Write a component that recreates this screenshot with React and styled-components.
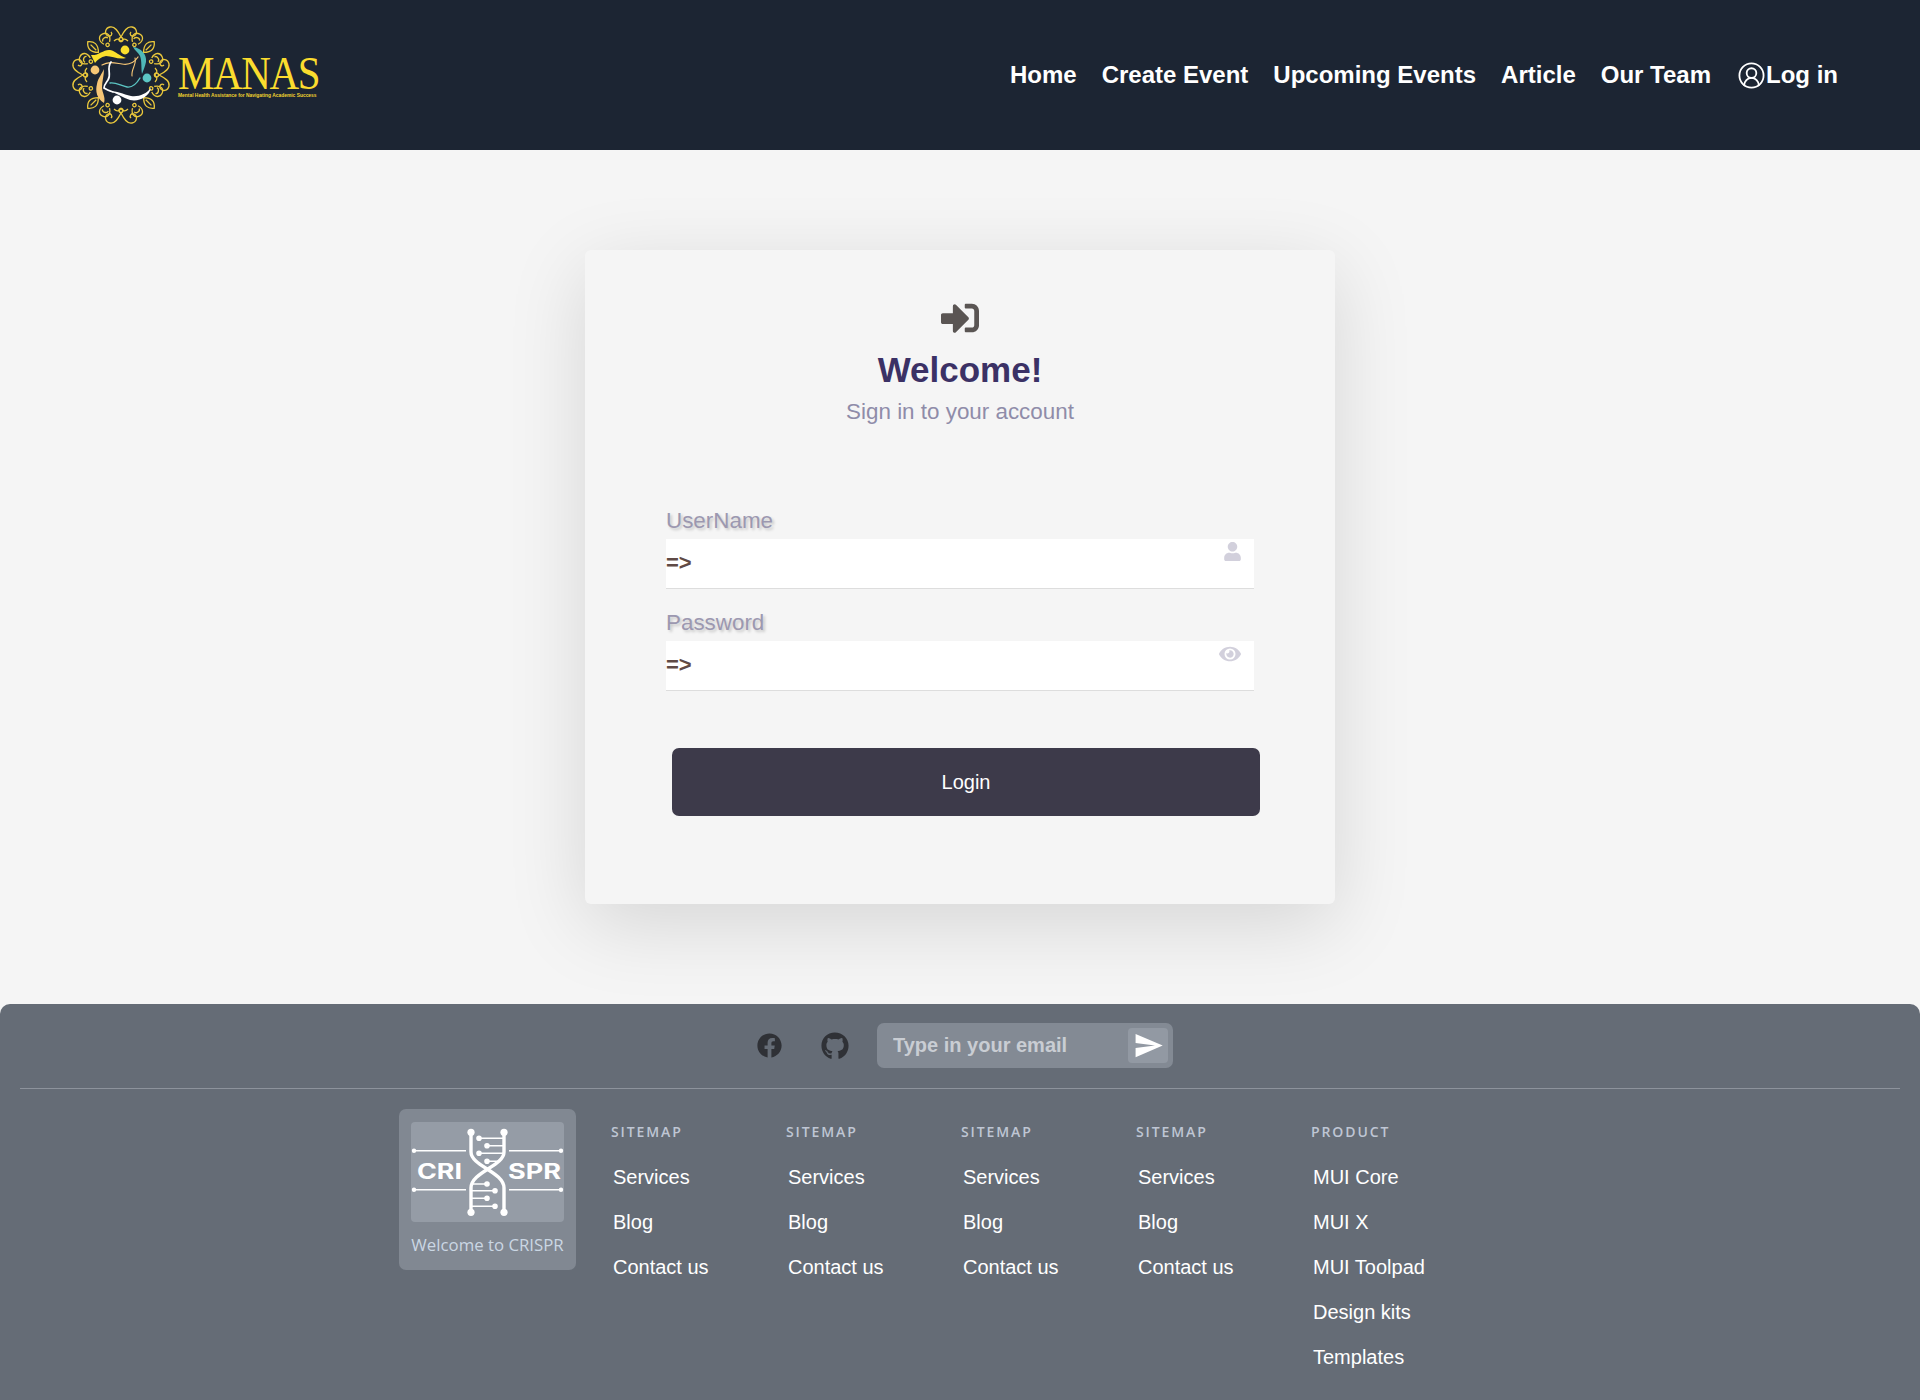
import styled, { createGlobalStyle } from "styled-components";
import { CircleUserRound } from "lucide-react";
import { FaFacebook, FaGithub, FaSignInAlt, FaUser, FaEye } from "react-icons/fa";
import { MdSend } from "react-icons/md";

const NAV_LINKS = ["Home", "Create Event", "Upcoming Events", "Article", "Our Team"];

const SITEMAP_LINKS = ["Services", "Blog", "Contact us"];

const FOOTER_COLUMNS = [
    { title: "SITEMAP", links: SITEMAP_LINKS },
    { title: "SITEMAP", links: SITEMAP_LINKS },
    { title: "SITEMAP", links: SITEMAP_LINKS },
    { title: "SITEMAP", links: SITEMAP_LINKS },
    { title: "PRODUCT", links: ["MUI Core", "MUI X", "MUI Toolpad", "Design kits", "Templates"] },
];

const GlobalStyle = createGlobalStyle`
    html, body {
        margin: 0;
        padding: 0;
        background: #f5f5f5;
        font-family: "Liberation Sans", Arial, sans-serif;
    }
    * {
        box-sizing: border-box;
    }
`;

const Page = styled.div`
    width: 1920px;
    height: 1400px;
    display: flex;
    flex-direction: column;
    overflow: hidden;
`;

const Header = styled.header`
    height: 150px;
    flex: none;
    display: flex;
    align-items: center;
    justify-content: space-between;
    padding: 0 82px 0 71px;
    background: #1c2533;
`;

const Brand = styled.div`
    display: flex;
    align-items: center;
    gap: 7px;
`;

const BrandText = styled.div`
    display: flex;
    flex-direction: column;
    width: 142px;
    margin-top: 6px;
`;

const BrandName = styled.span`
    font-family: "Liberation Serif", serif;
    font-size: 41px;
    line-height: 36px;
    letter-spacing: -1.4px;
    color: #fbdc2e;
    white-space: nowrap;
    transform: scaleY(1.14);
    transform-origin: center bottom;
`;

const BrandTagline = styled.span`
    font-size: 4.9px;
    line-height: 4px;
    font-weight: 700;
    color: #f2d22e;
    white-space: nowrap;
`;

const Nav = styled.nav`
    display: flex;
    align-items: center;
    gap: 25px;
`;

const NavLink = styled.a`
    display: flex;
    align-items: center;
    font-size: 24px;
    font-weight: 700;
    color: #ffffff;
    white-space: nowrap;
`;

const LoginLink = styled(NavLink)`
    margin-left: 1px;
`;

const Main = styled.main`
    flex: 1;
    display: flex;
    justify-content: center;
    align-items: flex-start;
    padding-top: 100px;
`;

const Card = styled.section`
    width: 750px;
    height: 654px;
    padding: 49px 81px 0;
    border-radius: 6px;
    background: #f5f5f5;
    box-shadow: 0 20px 80px rgba(0, 0, 0, 0.13);
`;

const CardHead = styled.div`
    display: flex;
    flex-direction: column;
    align-items: center;
    color: #5a5553;
`;

const Title = styled.h2`
    margin: 12px 0 0;
    font-size: 35px;
    line-height: 42px;
    font-weight: 700;
    color: #3b3165;
`;

const Subtitle = styled.p`
    margin: 7px 0 0;
    font-size: 22.4px;
    line-height: 28px;
    color: #8f8ca9;
`;

const Form = styled.form`
    display: flex;
    flex-direction: column;
    margin-top: 79px;
`;

const Field = styled.div`
    display: flex;
    flex-direction: column;
    margin-bottom: 18px;
`;

const Label = styled.label`
    margin-bottom: 3px;
    font-size: 22.4px;
    line-height: 31px;
    color: #9c98b0;
    text-shadow: 2px 2px 3px rgba(0, 0, 0, 0.2);
`;

const InputWrap = styled.div`
    position: relative;
    color: #d2d0dc;
`;

const Input = styled.input`
    display: block;
    width: 100%;
    height: 50px;
    padding: 0 0 1px;
    border: 0;
    border-bottom: 1px solid #dddddd;
    outline: none;
    background: #ffffff;
    font-family: inherit;
    font-size: 22px;
    font-weight: 700;
    color: #5f4a45;
`;

const FieldIcon = styled.span`
    position: absolute;
    top: ${(p) => p.$top}px;
    right: ${(p) => p.$right}px;
    display: flex;
`;

const LoginButton = styled.button`
    width: 588px;
    height: 68px;
    margin: 39px 0 0 6px;
    border: 0;
    border-radius: 7px;
    background: #3d3a4a;
    font-family: inherit;
    font-size: 20px;
    color: #ffffff;
`;

const Footer = styled.footer`
    height: 396px;
    flex: none;
    padding: 0 20px;
    border-radius: 10px 10px 0 0;
    background: #656c76;
`;

const FooterTop = styled.div`
    height: 85px;
    display: flex;
    align-items: center;
    padding: 0 0 1px 737px;
    border-bottom: 1px solid #8d939c;
    color: #2f3136;
`;

const SocialLink = styled.a`
    display: flex;
    margin-right: ${(p) => p.$gap}px;
`;

const Subscribe = styled.div`
    width: 296px;
    height: 45px;
    display: flex;
    align-items: center;
    justify-content: space-between;
    padding: 0 5px 0 16px;
    border-radius: 7px;
    background: #838a94;
`;

const EmailInput = styled.input`
    width: 220px;
    padding: 0;
    border: 0;
    outline: none;
    background: transparent;
    font-family: inherit;
    font-size: 20px;
    font-weight: 700;
    color: #ffffff;

    &::placeholder {
        color: #c9cdd3;
        opacity: 1;
    }
`;

const SendButton = styled.button`
    width: 40px;
    height: 35px;
    display: flex;
    align-items: center;
    justify-content: center;
    padding: 0;
    border: 0;
    border-radius: 4px;
    background: #9299a3;
    color: #ffffff;
`;

const FooterLinks = styled.div`
    display: flex;
    align-items: flex-start;
    padding: 20px 0 0 379px;
`;

const CrisprCard = styled.div`
    width: 177px;
    height: 161px;
    display: flex;
    flex-direction: column;
    align-items: center;
    padding-top: 13px;
    margin-right: 36px;
    border-radius: 7px;
    background: #818892;
`;

const CrisprImage = styled.div`
    width: 153px;
    height: 100px;
    border-radius: 4px;
    background: #959ca6;
`;

const CrisprCaption = styled.span`
    margin-top: 12px;
    font-family: "Open Sans", sans-serif;
    font-size: 16.8px;
    line-height: 22px;
    color: #cbd7e4;
    white-space: nowrap;
`;

const Column = styled.div`
    width: 175px;
    display: flex;
    flex-direction: column;
    margin-top: 13px;
`;

const ColumnTitle = styled.h6`
    margin: 0 0 0 -1px;
    font-family: "Open Sans", sans-serif;
    font-size: 14px;
    line-height: 20px;
    font-weight: 600;
    letter-spacing: 1.9px;
    color: #bfc6d4;
`;

const ColumnLink = styled.a`
    margin: 13px 0 0 1px;
    font-size: 20px;
    line-height: 32px;
    color: #ffffff;
`;

const FirstSpacer = styled.div`
    height: 6px;
`;

const QUARTERS = [0, 90, 180, 270];

function MandalaUnit() {
    return (
        <>
            <path d="M50 12 C47 6 44 1 39 2 C34 3 33 9 37 11 C40 12 42 9 40 7" />
            <path d="M50 12 C53 6 56 1 61 2 C66 3 67 9 63 11 C60 12 58 9 60 7" />
            <circle cx="50" cy="14.5" r="2" />
            <path d="M43 16 C46 13 48 14 50 16.5 C52 14 54 13 57 16" />
            {[-24, 24].map((angle) => (
                <g key={angle} transform={`rotate(${angle} 50 50)`}>
                    <path d="M47 15 C43 10 45 5 50 5 C55 5 57 10 53 15" />
                    <circle cx="50" cy="17" r="1.7" />
                    <path d="M47 12 C47 9 52 8 53 11" />
                </g>
            ))}
            <g transform="rotate(45 50 50)">
                <path d="M50 3 C45 7 44 12 50 18 C56 12 55 7 50 3Z" />
                <path d="M50 7 V15" />
            </g>
        </>
    );
}

function MandalaLogo() {
    return (
        <svg width="100" height="100" viewBox="0 0 100 100" fill="none">
            <g stroke="#eac83c" strokeWidth="1.3">
                {QUARTERS.map((angle) => (
                    <g key={angle} transform={`rotate(${angle} 50 50)`}>
                        <MandalaUnit />
                    </g>
                ))}
            </g>
            <path d="M20 30 C27 31 33 24 39 25 C45 26 48 31 55 33 C48 35 41 31 35 31 C30 32 26 35 24 38 Z" fill="#fbe02c" />
            <circle cx="54" cy="25" r="4.4" fill="#fbe02c" />
            <path d="M62 22 C70 23 76 29 75 37 C74 42 72 46 71 49 C70 43 71 36 69 31 C67 27 64 26 62 22 Z" fill="#4fb7b7" />
            <circle cx="76" cy="53" r="4.4" fill="#5cc6c4" />
            <path d="M80 63 C78 72 68 77 59 75 C52 73 46 68 38 66 C46 66 52 69 60 71 C68 72 75 69 80 63 Z" fill="#ffffff" />
            <circle cx="46" cy="75" r="4.4" fill="#ffffff" />
            <circle cx="24" cy="45" r="4.4" fill="#f6c676" />
            <path d="M33 78 C26 74 24 66 26 59 C27 53 31 49 33 44 C33 51 31 56 31 62 C31 68 35 72 33 78 Z" fill="#f6c676" />
            <g fill="none" strokeLinecap="round">
                <path d="M31 40 C38 36 44 38 51 39 C57 40 63 38 67 32" stroke="#f6c676" strokeWidth="1.2" />
                <path d="M64 33 C66 39 60 44 61 51" stroke="#f6c676" strokeWidth="1.1" />
                <path d="M40 37 C35 44 41 49 37 55 C35 58 33 60 33 63 C36 65 39 66 42 67" stroke="#ffffff" strokeWidth="1.7" />
                <path d="M39 58 C45 57 50 61 56 62 C62 63 66 58 69 53" stroke="#5cc6c4" strokeWidth="1.4" />
            </g>
        </svg>
    );
}

function CrisprLogo() {
    return (
        <svg width="153" height="100" viewBox="0 0 153 100" fill="none">
            <g stroke="#ffffff" strokeWidth="1.6" fill="#ffffff">
                <path d="M3 28.7H55M98 28.7H150M3 67.7H55M98 67.7H150" />
                <circle cx="3" cy="28.7" r="1.4" />
                <circle cx="150" cy="28.7" r="1.4" />
                <circle cx="3" cy="67.7" r="1.4" />
                <circle cx="150" cy="67.7" r="1.4" />
                <path d="M68 16.3H93M76 23.7H93M68 31.3H93M76 39.3H88M60 62H76M60 68.7H84M60 76.3H76M60 84.3H84" />
                <circle cx="68" cy="16.3" r="2" />
                <circle cx="76" cy="23.7" r="2" />
                <circle cx="68" cy="31.3" r="2" />
                <circle cx="76" cy="39.3" r="2" />
                <circle cx="76" cy="62" r="2" />
                <circle cx="84" cy="68.7" r="2" />
                <circle cx="76" cy="76.3" r="2" />
                <circle cx="84" cy="84.3" r="2" />
            </g>
            <g stroke="#ffffff" strokeWidth="3.4">
                <path d="M60 10V30C60 44 93 50 93 66V90" />
                <path d="M93 10V30C93 44 60 50 60 66V90" />
            </g>
            <g fill="#ffffff">
                <circle cx="60" cy="10.3" r="3.6" />
                <circle cx="93" cy="10.3" r="3.6" />
                <circle cx="60" cy="90.3" r="3.6" />
                <circle cx="93" cy="90.3" r="3.6" />
            </g>
            <g fill="#ffffff" fontFamily="Inter, sans-serif" fontWeight="700" fontSize="21">
                <text x="6" y="57" textLength="45" lengthAdjust="spacingAndGlyphs">CRI</text>
                <text x="97" y="57" textLength="53" lengthAdjust="spacingAndGlyphs">SPR</text>
            </g>
        </svg>
    );
}

function FooterColumn({ title, links }) {
    return (
        <Column>
            <ColumnTitle>{title}</ColumnTitle>
            <FirstSpacer />
            {links.map((link, i) => (
                <ColumnLink key={i}>{link}</ColumnLink>
            ))}
        </Column>
    );
}

function App() {
    return (
        <Page>
            <GlobalStyle />
            <Header>
                <Brand>
                    <MandalaLogo />
                    <BrandText>
                        <BrandName>MANAS</BrandName>
                        <BrandTagline>Mental Health Assistance for Navigating Academic Success</BrandTagline>
                    </BrandText>
                </Brand>
                <Nav>
                    {NAV_LINKS.map((link) => (
                        <NavLink key={link}>{link}</NavLink>
                    ))}
                    <LoginLink>
                        <CircleUserRound size={29} strokeWidth={1.5} />
                        Log in
                    </LoginLink>
                </Nav>
            </Header>
            <Main>
                <Card>
                    <CardHead>
                        <FaSignInAlt size={38} />
                        <Title>Welcome!</Title>
                        <Subtitle>Sign in to your account</Subtitle>
                    </CardHead>
                    <Form>
                        <Field>
                            <Label>UserName</Label>
                            <InputWrap>
                                <Input type="text" defaultValue="=>" />
                                <FieldIcon $top={3} $right={12}>
                                    <FaUser size={19} />
                                </FieldIcon>
                            </InputWrap>
                        </Field>
                        <Field>
                            <Label>Password</Label>
                            <InputWrap>
                                <Input type="text" defaultValue="=>" />
                                <FieldIcon $top={2} $right={13}>
                                    <FaEye size={22} />
                                </FieldIcon>
                            </InputWrap>
                        </Field>
                        <LoginButton type="button">Login</LoginButton>
                    </Form>
                </Card>
            </Main>
            <Footer>
                <FooterTop>
                    <SocialLink $gap={39}>
                        <FaFacebook size={25} />
                    </SocialLink>
                    <SocialLink $gap={28}>
                        <FaGithub size={28} />
                    </SocialLink>
                    <Subscribe>
                        <EmailInput placeholder="Type in your email" />
                        <SendButton type="button">
                            <MdSend size={31} />
                        </SendButton>
                    </Subscribe>
                </FooterTop>
                <FooterLinks>
                    <CrisprCard>
                        <CrisprImage>
                            <CrisprLogo />
                        </CrisprImage>
                        <CrisprCaption>Welcome to CRISPR</CrisprCaption>
                    </CrisprCard>
                    {FOOTER_COLUMNS.map((column, i) => (
                        <FooterColumn key={i} title={column.title} links={column.links} />
                    ))}
                </FooterLinks>
            </Footer>
        </Page>
    );
}

export default App;
